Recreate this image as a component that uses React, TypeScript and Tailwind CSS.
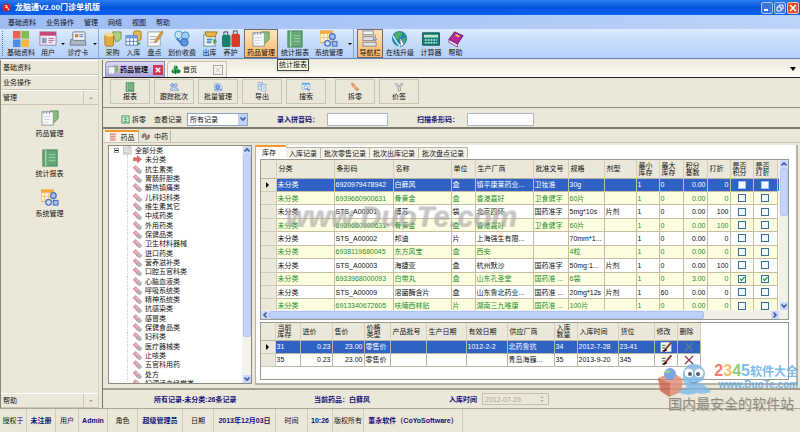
import type { ReactNode } from "react";
import clsx from "clsx";

const icons: Record<string, ReactNode> = {
  blocks: (
    <>
      <rect x="1" y="1" width="8" height="8" fill="#e8664f" />
      <rect x="10" y="1" width="8" height="8" fill="#7cbf4b" />
      <rect x="1" y="10" width="8" height="8" fill="#4c8fe0" />
      <rect x="10" y="10" width="8" height="8" fill="#f4b93c" />
    </>
  ),
  user: (
    <>
      <rect x="1" y="2" width="17" height="14" fill="#f4eef4" stroke="#9a86a8" />
      <rect x="1" y="2" width="17" height="4" fill="#c8487a" />
      <rect x="3" y="8" width="5" height="6" fill="#8d9cc8" />
      <path d="M10 9h6M10 11h6M10 13h4" stroke="#b0648c" />
    </>
  ),
  card: (
    <>
      <path d="M2 10h15l1 6H1z" fill="#aab6c4" stroke="#6f7d90" />
      <rect x="4" y="2" width="13" height="9" rx="1" fill="#eef2f8" stroke="#6f7d90" />
      <circle cx="8" cy="6" r="2" fill="#c98447" />
      <path d="M11 5h4M11 7h4" stroke="#5a78b8" />
    </>
  ),
  buy: (
    <>
      <path d="M9 2h9v7q-2 4-6 3z" fill="#a9cf84" stroke="#6e9c4d" />
      <rect x="1" y="4" width="9" height="13" rx="2" fill="#e2ad3c" stroke="#a97a20" />
      <ellipse cx="5.5" cy="5" rx="4.5" ry="2" fill="#f8dc8c" />
    </>
  ),
  instock: (
    <>
      <rect x="9" y="1" width="8" height="10" rx="2" fill="#e7b94c" stroke="#a97a20" />
      <rect x="1" y="6" width="12" height="10" fill="#fff" stroke="#5b7fc0" />
      <rect x="1" y="6" width="12" height="3" fill="#6d9ae0" />
      <path d="M5 9v7M9 9v7M1 12h12" stroke="#5b7fc0" />
      <path d="m13 12 4 2-4 3z" fill="#4caf50" />
    </>
  ),
  check: (
    <>
      <rect x="2" y="2" width="13" height="15" fill="#fbfbf4" stroke="#9aa0a8" />
      <path d="M4 7h7M4 10h6M4 13h8" stroke="#9ab0d0" />
      <path d="m17 1-7 9-1 3 3-1 6-9z" fill="#eaa23a" stroke="#8a5a20" strokeWidth=".6" />
    </>
  ),
  price: (
    <>
      <circle cx="6" cy="5" r="4" fill="#bfe4f8" stroke="#4b9ad0" />
      <circle cx="13" cy="6" r="4" fill="#9ccff2" stroke="#4b86c8" />
      <circle cx="12" cy="13" r="4" fill="#5f95e0" stroke="#35609c" />
      <path d="m4 9 5 5" stroke="#3a78c0" strokeWidth="2" />
    </>
  ),
  outstock: (
    <>
      <rect x="3" y="5" width="12" height="12" fill="#f4f4ea" stroke="#5c8fb0" />
      <path d="M4 2h13l-2 5H6z" fill="#e9b546" stroke="#a47620" />
      <path d="M6 10h6M6 13h5" stroke="#4f8fd0" strokeWidth="2" />
      <path d="m13 9 4 3-4 3z" fill="#3fa64c" />
    </>
  ),
  care: (
    <>
      <rect x="0" y="5" width="9" height="13" rx="2" fill="#17806f" />
      <rect x="10" y="4" width="9" height="14" rx="2" fill="#d63a28" />
      <path d="M2 5V2h4v3M12 4V1h4v3" stroke="#444" fill="none" />
    </>
  ),
  note: (
    <>
      <path d="M10 2h8v8l-6 6z" fill="#8cbf73" stroke="#5d8f4e" />
      <rect x="1" y="3" width="12" height="14" fill="#fafafa" stroke="#8c97a8" />
      <path d="M3 2v3M6 2v3M9 2v3" stroke="#7d879c" />
      <path d="M3 8h7M3 11h7M3 14h5" stroke="#c7d1e2" />
    </>
  ),
  report: (
    <>
      <rect x="2" y="1" width="15" height="17" fill="#66a878" stroke="#42805a" />
      <path d="M5 1v17" stroke="#c5e3c8" />
      <path d="M8 6h7M8 9h7M8 12h7" stroke="#a2d0a8" />
    </>
  ),
  system: (
    <>
      <rect x="0" y="1" width="13" height="12" fill="#fff6d8" stroke="#e0a33a" />
      <rect x="0" y="1" width="13" height="3" fill="#f4a93a" />
      <path d="M4 4v8M8 4v8M1 8h11" stroke="#f0c878" />
      <circle cx="13" cy="7" r="3" fill="#a9c3f0" stroke="#5478c0" strokeWidth="1.5" />
      <circle cx="8" cy="14" r="3" fill="#d4e0f8" stroke="#5478c0" strokeWidth="1.5" />
      <rect x="13" y="12" width="5" height="5" fill="#9dbbf0" stroke="#4468b8" />
    </>
  ),
  nav: (
    <>
      <rect x="2" y="1" width="11" height="4" fill="#f2f2f2" stroke="#8a8a9c" />
      <rect x="2" y="7" width="11" height="4" fill="#dfe3ee" stroke="#8a8a9c" />
      <rect x="2" y="13" width="14" height="4" fill="#dfe3ee" stroke="#8a8a9c" />
      <path d="M15 5v6m-2-2 2 3 2-3" stroke="#6e83c8" fill="none" />
    </>
  ),
  upgrade: (
    <>
      <circle cx="9" cy="9" r="8" fill="#2389a8" />
      <path d="M4 4q5-4 8 0l-3 5-4 1zM11 10l5-2-2 7-4 1z" fill="#4fb45b" />
      <path d="M9 7l5 8-4 3z" fill="#fff" stroke="#426fba" />
      <path d="M2 6q4 8 8 11" stroke="#d7eaf8" fill="none" strokeWidth="1.5" />
    </>
  ),
  calc: (
    <>
      <rect x="0" y="3" width="19" height="13" rx="1" fill="#157c78" stroke="#0b5452" />
      <rect x="2" y="5" width="15" height="3" fill="#b9e2cc" />
      <path d="M3 10.500h13M3 13.500h13" stroke="#c9f0e2" strokeWidth="1.500" strokeDasharray="2 1" />
    </>
  ),
  help: (
    <>
      <path d="m8 2 9 4-6 9-9-5z" fill="#b32a9c" stroke="#6b1566" />
      <path d="m2 10 9 5v3l-9-5z" fill="#f3e6f2" stroke="#6b1566" strokeWidth=".7" />
      <path d="m9 5 4 2" stroke="#f7cf4f" strokeWidth="2" />
    </>
  ),
  batch: (
    <>
      <circle cx="6" cy="6" r="3" fill="#9fb7ec" stroke="#5475c0" />
      <circle cx="13" cy="6" r="3" fill="#b9cdf4" stroke="#5475c0" />
      <path d="M2 16q0-6 5-5 2-2 5 0 6-1 6 5z" fill="#c7d4f0" stroke="#7088c4" />
    </>
  ),
  people: (
    <>
      <path d="M3 3h10l4 5v9H3z" fill="#dfe9fb" stroke="#5f85cc" />
      <circle cx="9" cy="9" r="4" fill="#7fa3e8" stroke="#3c62b0" />
      <path d="M4 14h12" stroke="#5f85cc" strokeWidth="2" />
    </>
  ),
  exportData: (
    <>
      <rect x="2" y="1" width="9" height="13" fill="#dbe7fa" stroke="#6c8cc8" />
      <rect x="9" y="5" width="8" height="12" fill="#eef4ff" stroke="#6c8cc8" />
      <path d="M4 5h5M4 8h4M11 9h4M11 12h4" stroke="#5377bd" />
    </>
  ),
  search: (
    <>
      <rect x="2" y="2" width="15" height="12" fill="#d9ebfb" stroke="#72a7d8" />
      <rect x="2" y="2" width="15" height="3" fill="#5fa3e2" />
      <circle cx="9" cy="10" r="3" fill="#fff" stroke="#4d78b4" />
      <path d="m11 12 5 5" stroke="#4d78b4" strokeWidth="2" />
    </>
  ),
  split: (
    <>
      <path d="M3 2q5-1 7 5l7 7-4 3-6-7Q3 8 3 2z" fill="#efa36b" stroke="#b86a38" />
      <path d="m7 6 6 7" stroke="#fbe2c8" />
    </>
  ),
  tag: <path d="M3 2q0 6 5 8v7h4v-7q4-2 4-8M6 2l4 7 4-7" fill="#eef0f0" stroke="#82878c" strokeWidth="1.500" />,
  home: (
    <>
      <circle cx="9" cy="5" r="4" fill="#16833b" />
      <circle cx="5" cy="12" r="4" fill="#1d9145" />
      <circle cx="14" cy="12" r="4" fill="#16833b" />
      <path d="M9 9v8" stroke="#0f6a2c" strokeWidth="3" />
      <circle cx="8" cy="4" r="1.500" fill="#7bd382" />
      <circle cx="5" cy="11" r="1.500" fill="#7bd382" />
    </>
  ),
  medicine: (
    <>
      <rect x="3" y="1" width="12" height="17" fill="#fff" stroke="#cf6464" />
      <path d="M4 4h10M4 8h10M4 12h10M4 16h10" stroke="#d45a5a" strokeWidth="2" />
    </>
  ),
  herb: (
    <>
      <path d="M2 12Q1 3 9 3l2 3q-5 0-5 6zM9 16l1-4q5 0 5-6l4 1q0 9-10 9z" fill="#8c8480" stroke="#625c5a" />
      <circle cx="10" cy="9" r="3" fill="#b07f78" />
    </>
  ),
  refresh: (
    <>
      <rect x="2" y="2" width="15" height="15" fill="#e4f2e2" stroke="#3a9154" strokeWidth="2" />
      <path d="M6 6h7M6 10h7M6 14h7" stroke="#3a9154" strokeWidth="2" />
    </>
  ),
  arrow: <path d="M1 6h8V1l9 8-9 8v-5H1z" fill="#dc6868" stroke="#b84e50" />,
  capsule: (
    <>
      <path d="m0 6 6-5 7 8-5 5z" fill="#e39ba5" stroke="#c4737e" />
      <path d="m7 14 6-6 6 6-5 5z" fill="#bcb5b8" stroke="#938a90" />
      <path d="m5 4 6 6" stroke="#fbe4e7" strokeWidth="1.500" />
    </>
  ),
  list: (
    <>
      <rect x="1" y="2" width="16" height="15" fill="#f3f3f0" stroke="#8a8a88" />
      <path d="M3 6h8M3 10h12M3 14h10M13 2v6" stroke="#8a8a88" />
    </>
  ),
  pen: (
    <>
      <rect x="1" y="2" width="17" height="15" fill="#f7f9ee" />
      <path d="M3 7h6M3 11h5" stroke="#4f9c55" strokeWidth="2" />
      <path d="M18 2 8 14l-2 3" stroke="#952d38" strokeWidth="3" fill="none" />
      <path d="m4 16 7-2" stroke="#111" strokeWidth="2" />
    </>
  ),
};

const Icon = ({ name, className }: { name: string; className: string }) => (
  <svg viewBox="0 0 19 19" className={clsx("shrink-0", className)} aria-hidden="true">
    {icons[name]}
  </svg>
);

const Chevron = ({ className }: { className: string }) => (
  <svg viewBox="0 0 8 8" className={clsx("h-2 w-2 shrink-0", className)} aria-hidden="true">
    <path d="m1.500 5.500 2.500-2.500 2.500 2.500" fill="none" stroke="#3d5a9c" strokeWidth="1.600" />
  </svg>
);

type Tool = { label: string; icon: string; width: string; active?: boolean; menu?: boolean; end?: boolean };

const tools: Tool[] = [
  { label: "基础资料", icon: "blocks", width: "w-7" },
  { label: "用户", icon: "user", width: "w-[26px]" },
  { label: "", icon: "", width: "w-1", menu: true },
  { label: "诊疗卡", icon: "card", width: "w-[26px]" },
  { label: "", icon: "", width: "w-2", menu: true, end: true },
  { label: "采购", icon: "buy", width: "w-[21px]" },
  { label: "入库", icon: "instock", width: "w-[21px]" },
  { label: "盘点", icon: "check", width: "w-[21px]" },
  { label: "划价收费", icon: "price", width: "w-[34px]" },
  { label: "出库", icon: "outstock", width: "w-[21px]" },
  { label: "养护", icon: "care", width: "w-[21px]", end: true },
  { label: "药品管理", icon: "note", width: "w-[34px]", active: true },
  { label: "统计报表", icon: "report", width: "w-[34px]" },
  { label: "系统管理", icon: "system", width: "w-[34px]" },
  { label: "", icon: "", width: "w-2", menu: true, end: true },
  { label: "导航栏", icon: "nav", width: "w-[26px]", active: true },
  { label: "在线升级", icon: "upgrade", width: "w-[34px]" },
  { label: "计算器", icon: "calc", width: "w-7" },
  { label: "帮助", icon: "help", width: "w-[21px]" },
];

const actions = [
  { label: "报表", icon: "report" },
  { label: "跟踪批次", icon: "batch" },
  { label: "批量管理", icon: "people" },
  { label: "导出", icon: "exportData" },
  { label: "搜索", icon: "search" },
  { label: "拆零", icon: "split" },
  { label: "价签", icon: "tag" },
];

const categories = [
  "未分类", "抗生素类", "胃肠肝胆类", "解热镇痛类", "儿科妇科类", "维生素其它", "中成药类", "外用药类", "保健品类",
  "卫生材料器械", "进口药类", "营养滋补类", "口腔五官科类", "心脑血液类", "呼吸系统类", "精神系统类", "抗感染类",
  "感冒类", "保健食品类", "妇科类", "医疗器械类", "止咳类", "五官科用药", "处方", "妇调活血经带类",
];

const stockColumns = [
  { name: "分类", width: "w-[58px]" },
  { name: "条形码", width: "w-[59px]" },
  { name: "名称", width: "w-[58px]" },
  { name: "单位", width: "w-6" },
  { name: "生产厂商", width: "w-[58px]" },
  { name: "批准文号", width: "w-[35px]" },
  { name: "规格", width: "w-9" },
  { name: "剂型", width: "w-8" },
  { name: "最小\n库存", width: "w-[23px]" },
  { name: "最大\n库存", width: "w-6" },
  { name: "积分\n基数", width: "w-6" },
  { name: "打折", width: "w-[23px]" },
  { name: "是否\n积分", width: "w-[23px]" },
  { name: "是否\n打折", width: "w-6" },
];

const stock = [
  ["未分类", "6920979478942", "白藓风", "盒", "镇平康莱药业...", "卫妆准", "30g", "", "1", "0", "0.00", "0"],
  ["未分类", "6939660900631", "骨黄金", "盒", "香港嘉好", "卫食健字", "60片", "", "1", "0", "0.00", "0"],
  ["未分类", "STS_A00001", "博苏", "袋", "北京四环", "国药准字", "5mg*10s", "片剂", "1", "0", "0.00", "100"],
  ["未分类", "6939660900631*", "骨黄金", "盒", "香港嘉好", "卫食健字", "60片", "", "1", "0", "0.00", "100"],
  ["未分类", "STS_A00002", "邦迪", "片", "上海强生有限...", "", "70mm*1...", "", "1", "0", "0.00", "0"],
  ["未分类", "6938119680045", "东方风宝", "盒", "西安", "", "4粒", "", "1", "0", "0.00", "0"],
  ["未分类", "STS_A00003", "海捷亚", "盒", "杭州默沙", "国药准字", "50mg:1...", "片剂", "1", "0", "0.00", "100"],
  ["未分类", "6933968000093", "白带丸", "盒", "山东孔圣堂", "国药准 ...", "6袋", "", "1", "0", "3.00", "0"],
  ["未分类", "STS_A00009", "溶菌酶含片", "盒", "山东鲁北药业...", "国药准 ...", "20mg*12s", "片剂", "1", "60", "0.00", "0"],
  ["未分类", "6913340672605", "呋喃西林贴", "片", "湖南三九唯康", "国药准 ...", "100片", "", "1", "0", "0.00", "0"],
];

const batchColumns = [
  { name: "当前\n库存", width: "w-[25px]" },
  { name: "进价", width: "w-8" },
  { name: "售价", width: "w-8" },
  { name: "价格\n类型", width: "w-[26px]" },
  { name: "产品批号", width: "w-9" },
  { name: "生产日期", width: "w-10" },
  { name: "有效日期", width: "w-[41px]" },
  { name: "供应厂商", width: "w-[47px]" },
  { name: "入库\n数量", width: "w-[23px]" },
  { name: "入库时间", width: "w-[41px]" },
  { name: "货位", width: "w-9" },
  { name: "修改", width: "w-[23px]" },
  { name: "删除", width: "w-[23px]" },
];

const batches = [
  ["31", "0.23", "23.00", "零售价", "", "", "1012-2-2", "北药鲁抗", "34", "2012-7-28", "23-41"],
  ["35", "0.23", "23.00", "零售价", "", "", "", "青岛海巍...", "35", "2013-9-20", "345"],
];

const statusCells = [
  { text: "授权于", width: "w-[27px]" },
  { text: "未注册", width: "w-[29px]", strong: true },
  { text: "用户", width: "w-[23px]" },
  { text: "Admin", width: "w-[29px]", strong: true },
  { text: "角色", width: "w-[30px]" },
  { text: "超级管理员", width: "w-[45px]", strong: true },
  { text: "日期", width: "w-[31px]" },
  { text: "2013年12月03日", width: "w-[62px]", strong: true },
  { text: "时间", width: "w-8" },
  { text: "10:26", width: "w-[25px]", strong: true },
  { text: "版权所有", width: "w-[31px]" },
  { text: "董永软件（CoYoSoftware）", width: "w-[99px]", strong: true },
];

const TitleBar = () => (
  <header className="flex h-[15px] items-center gap-1 bg-linear-to-b from-[#2a7df0] via-[#0553dd] to-[#0a62f4] pr-px pl-[2px] text-white">
    <svg viewBox="0 0 10 10" className="h-[9px] w-[9px]" aria-hidden="true">
      <circle cx="5" cy="5" r="4.500" fill="#d91f26" />
      <path d="M3 3q3-1 3 1L4 5q4 0 3 3" fill="none" stroke="#fff" />
    </svg>
    <h1 className="text-[8px] leading-none font-bold">龙脑通V2.00门诊单机版</h1>
    <div className="ml-auto flex gap-px">
      <button aria-label="最小化" className="flex h-3 w-3 items-end rounded-xs border border-[#a9c5f5] bg-[#3c74e0] p-[2px]">
        <span className="h-[2px] w-1 bg-white" />
      </button>
      <button aria-label="还原" className="grid h-3 w-3 place-items-center rounded-xs border border-[#a9c5f5] bg-[#3c74e0]">
        <svg viewBox="0 0 8 8" className="h-2 w-2" fill="none" stroke="#fff" aria-hidden="true">
          <path d="M3 3V1h4v4H5M1 3h4v4H1z" />
        </svg>
      </button>
      <button aria-label="关闭" className="grid h-3 w-3 place-items-center rounded-xs border border-[#f0c0b0] bg-[#dc5030]">
        <svg viewBox="0 0 8 8" className="h-2 w-2" stroke="#fff" strokeWidth="1.500" aria-hidden="true">
          <path d="m1 1 6 6M7 1 1 7" />
        </svg>
      </button>
    </div>
  </header>
);

const ToolBar = () => (
  <div className="relative flex h-[30px] items-stretch border-b border-[#6b83bd] bg-linear-to-b from-[#dcebff] via-[#c5dbf8] to-[#b4d0fa]">
    <span className="my-[2px] mr-1 ml-[2px] border-l border-dotted border-[#5777b5]" />
    {tools.map((tool, i) =>
      tool.menu ? (
        <div key={i} className={clsx("flex items-center justify-center", tool.width, tool.end && "mr-[3px] border-r border-[#8aa6d8]")}>
          <span className="border-x-2 border-t-2 border-x-transparent border-t-black" />
        </div>
      ) : (
        <button
          key={i}
          className={clsx(
            "flex flex-col items-center whitespace-nowrap",
            tool.width,
            tool.active ? "border border-[#6c6a78] bg-linear-to-b from-[#fde6b8] to-[#f9b765]" : "pt-px",
            tool.end && "mr-[3px]",
          )}
        >
          <Icon name={tool.icon} className="h-[18px] w-[18px]" />
          <span className="leading-[9px]">{tool.label}</span>
        </button>
      ),
    )}
    <div role="tooltip" className="absolute top-[30px] left-[277px] z-10 border border-[#444] bg-[#fbfbe4] px-px leading-[10px] shadow">
      统计报表
    </div>
  </div>
);

const SideHeader = ({ label, arrow }: { label: string; arrow?: "up" | "down" }) => (
  <button className="flex h-[15px] w-full items-center border-t border-b border-t-white border-b-[#c9c5b2] bg-[#ebe8d9] pl-[2px] text-left">
    {label}
    {arrow && (
      <span className="ml-auto grid h-full w-[15px] place-items-center border-l border-[#cdc9b6]">
        <span
          className={clsx(
            "border-x-2 border-x-transparent",
            arrow === "up" ? "border-b-2 border-b-[#a8a594]" : "border-t-2 border-t-[#a8a594]",
          )}
        />
      </span>
    )}
  </button>
);

const SideBar = () => (
  <nav className="flex w-[99px] shrink-0 flex-col border-r border-l border-r-[#d4d0bf] border-l-[#8a8778] bg-[#ebe8d9]">
    <SideHeader label="基础资料" />
    <SideHeader label="业务操作" />
    <SideHeader label="管理" arrow="up" />
    <div className="flex flex-1 flex-col items-center gap-[11px] pt-1">
      {[["note", "药品管理"], ["report", "统计报表"], ["system", "系统管理"]].map(([icon, label]) => (
        <button key={label} className="flex flex-col items-center gap-[2px]">
          <Icon name={icon} className="h-[18px] w-[18px]" />
          <span>{label}</span>
        </button>
      ))}
    </div>
    <SideHeader label="帮助" arrow="down" />
  </nav>
);

const DocumentTabs = () => (
  <div className="flex h-[18px] items-end border-b border-[#222] bg-linear-to-b from-[#eeebdb] to-[#fdfdf8] pl-[2px]">
    <div className="flex h-4 w-[60px] items-center gap-[2px] rounded-tl border border-b-0 border-[#8f8ab8] bg-linear-to-b from-[#dcd8f4] to-[#aaa2dc] pl-[2px]">
      <Icon name="note" className="h-[10px] w-[10px]" />
      <span className="font-bold">药品管理</span>
      <button aria-label="关闭药品管理" className="mr-px ml-auto grid h-[10px] w-[10px] place-items-center bg-[#c8384e]">
        <svg viewBox="0 0 8 8" className="h-[6px] w-[6px]" stroke="#fff" strokeWidth="2" aria-hidden="true">
          <path d="m1 1 6 6M7 1 1 7" />
        </svg>
      </button>
    </div>
    <div className="ml-[2px] flex h-4 w-[60px] items-center gap-[2px] rounded-tl border border-b-0 border-[#c4c1b4] bg-[#f6f4ea] pl-[3px]">
      <Icon name="home" className="h-[10px] w-[10px]" />
      <span>首页</span>
      <button aria-label="关闭首页" className="mr-[3px] ml-auto grid h-[10px] w-[10px] place-items-center border border-[#aaa]">
        <svg viewBox="0 0 8 8" className="h-[6px] w-[6px]" stroke="#bbb" aria-hidden="true">
          <path d="m1 1 6 6M7 1 1 7" />
        </svg>
      </button>
    </div>
    <button aria-label="标签列表" className="mr-1 mb-[6px] ml-auto border-x-[3px] border-t-4 border-x-transparent border-t-black" />
  </div>
);

const FilterBar = () => (
  <form className="flex h-[21px] items-center border-b-2 border-[#7d7b70] pt-[3px] pl-[18px]">
    <button type="button" className="flex items-center gap-[2px]">
      <Icon name="refresh" className="h-[9px] w-[9px]" />
      拆零
    </button>
    <label htmlFor="records" className="ml-2">查看记录</label>
    <div className="relative ml-[5px] w-[61px]">
      <select id="records" className="block h-[13px] w-full appearance-none border border-[#8ba3c4] bg-white pl-[2px]">
        <option>所有记录</option>
      </select>
      <span className="pointer-events-none absolute top-px right-px grid h-[11px] w-[9px] place-items-center bg-[#bfd1fa]">
        <Chevron className="rotate-180" />
      </span>
    </div>
    <label htmlFor="pinyin" className="ml-[29px] font-bold text-[#12127a]">录入拼音码：</label>
    <input id="pinyin" className="ml-2 h-[13px] w-[61px] border border-[#a9b8c8] bg-white px-px" />
    <label htmlFor="barcode" className="ml-[29px] font-bold text-[#12127a]">扫描条形码：</label>
    <input id="barcode" className="ml-2 h-[13px] w-[67px] border border-[#a9b8c8] bg-white px-px" />
  </form>
);

const CategoryTree = () => (
  <div className="flex h-[239px] w-[144px] shrink-0 overflow-hidden border border-[#8d8b7e] bg-white">
    <ul className="flex h-[242px] min-w-0 flex-1 flex-col">
      <li className="flex flex-1 items-center gap-[3px] pl-[5px]">
        <span className="grid h-[5px] w-[5px] place-items-center border border-[#9aa2b0]">
          <span className="h-px w-[3px] bg-black" />
        </span>
        <Icon name="list" className="ml-px h-[9px] w-[9px]" />
        全部分类
      </li>
      {categories.map((name, i) => (
        <li key={name} className="ml-[18px] flex min-h-0 flex-1 items-center gap-[3px] border-l border-dotted border-[#ccc] pl-[5px] leading-[9px]">
          <Icon name={i === 0 ? "arrow" : "capsule"} className="h-[9px] w-[9px]" />
          {name}
        </li>
      ))}
    </ul>
    <div className="flex w-[9px] flex-col items-center bg-[#f3f3ec]">
      <Chevron className="bg-[#cad8fb]" />
      <div className="h-[183px] w-2 rounded-xs border border-[#b2c6f4] bg-[#c4d4fb]" />
      <Chevron className="mt-auto rotate-180 bg-[#cad8fb]" />
    </div>
  </div>
);

const TickBox = ({ label, checked, selected }: { label: string; checked: boolean; selected: boolean }) => (
  <span className="relative mx-auto block h-2 w-2">
    <input
      type="checkbox"
      aria-label={label}
      defaultChecked={checked}
      className={clsx("peer block h-2 w-2 appearance-none border bg-[#f4f9fc]", selected ? "border-[#9fc0ee]" : "border-[#3d6f9c]")}
    />
    <svg viewBox="0 0 8 8" className="pointer-events-none absolute inset-0 hidden h-2 w-2 peer-checked:block" aria-hidden="true">
      <path d="m2 3.500 1.500 2 3-3.500" fill="none" stroke="#2b9a3c" strokeWidth="1.200" />
    </svg>
  </span>
);

const HeadCell = ({ name, width }: { name: string; width: string }) => (
  <th className={clsx("border-r border-[#d3cfbd] p-0 pl-[2px] text-left leading-[7px] font-normal whitespace-pre", width)}>{name}</th>
);

const Marker = ({ selected }: { selected: boolean }) => (
  <td className="border-r border-b border-[#cfcbb8] bg-[#ebe8d9] p-0">
    {selected && <span className="ml-[5px] block w-1 border-y-[3px] border-l-[3px] border-y-transparent border-l-black" />}
  </td>
);

const StockTable = () => (
  <div className="border border-[#9a988c] bg-[#ebe8d9]">
    <div className="flex h-[150px]">
      <div className="relative min-w-0 flex-1 overflow-hidden bg-white">
        <table className="h-[153px] w-full table-fixed border-collapse">
          <thead>
            <tr className="h-[18px] border-b border-[#b5b2a2] bg-[#ebe8d9]">
              <th className="w-[15px] border-r border-[#d3cfbd] p-0" />
              {stockColumns.map((column) => <HeadCell key={column.name} {...column} />)}
              <th className="p-0" />
            </tr>
          </thead>
          <tbody>
            {stock.map((row, i) => (
              <tr
                key={i}
                className={clsx(i === 0 ? "bg-[#2f62c4] text-white" : i % 2 ? "bg-[#fdfde0] text-[#22902a]" : "bg-white")}
              >
                <Marker selected={i === 0} />
                {row.map((cell, j) => (
                  <td
                    key={j}
                    className={clsx(
                      "overflow-hidden border-r border-b border-[#c7bda2] p-0 px-px leading-[9px] whitespace-nowrap",
                      j > 9 && "text-right",
                    )}
                  >
                    {cell}
                  </td>
                ))}
                <td className="border-r border-b border-[#c7bda2] p-0">
                  <TickBox label="是否积分" checked={i === 7} selected={i === 0} />
                </td>
                <td className="border-r border-b border-[#c7bda2] p-0">
                  <TickBox label="是否打折" checked={i === 7} selected={i === 0} />
                </td>
                <td className="p-0" />
              </tr>
            ))}
          </tbody>
        </table>
        <span className="pointer-events-none absolute top-[42px] left-6 font-[Liberation_Sans,sans-serif] text-[29px] leading-none font-bold text-[#c4c4c4]/50 italic [text-shadow:1px_1px_1px_#7776]">
          www.DuoTe.com
        </span>
      </div>
      <div className="flex w-[9px] flex-col items-center bg-[#f1f1ea]">
        <Chevron className="bg-[#cad8fb]" />
        <div className="h-12 w-2 rounded-xs border border-[#b2c6f4] bg-[#c4d4fb]" />
        <Chevron className="mt-auto rotate-180 bg-[#cad8fb]" />
      </div>
    </div>
    <div className="flex h-[9px] items-center bg-[#f1f1ea] pr-[9px]">
      <Chevron className="-rotate-90 bg-[#cad8fb]" />
      <div className="h-2 w-[84%] rounded-xs border border-[#a9c4f4] bg-[#bdd2fb]" />
      <Chevron className="ml-auto rotate-90 bg-[#cad8fb]" />
    </div>
  </div>
);

const BatchTable = () => (
  <div className="h-[58px] border border-[#9a988c] bg-white">
    <table className="w-[439px] table-fixed border-collapse">
      <thead>
        <tr className="h-[17px] border-b border-[#b5b2a2] bg-[#ebe8d9]">
          <th className="w-[14px] border-r border-[#d3cfbd] p-0" />
          {batchColumns.map((column) => <HeadCell key={column.name} {...column} />)}
        </tr>
      </thead>
      <tbody>
        {batches.map((row, i) => (
          <tr key={i} className={clsx("h-[13px]", i === 0 && "bg-[#2f62c4] text-white")}>
            <Marker selected={i === 0} />
            {row.map((cell, j) => (
              <td
                key={j}
                className={clsx(
                  "overflow-hidden border-r border-b border-[#b9b5a6] p-0 px-px leading-[9px] whitespace-nowrap",
                  (j === 1 || j === 2) && "text-right",
                )}
              >
                {cell}
              </td>
            ))}
            <td className="border-r border-b border-[#b9b5a6] p-0">
              <button aria-label="修改" className="mx-auto block">
                <Icon name="pen" className="h-3 w-3" />
              </button>
            </td>
            <td className="border-r border-b border-[#b9b5a6] p-0">
              <button aria-label="删除" className="mx-auto block">
                <svg viewBox="0 0 10 10" className="h-[10px] w-[10px]" aria-hidden="true">
                  <path d="m1 1 8 8M9 1 1 9" stroke={i === 0 ? "#5f7e84" : "#8c3a4c"} strokeWidth="1.300" />
                </svg>
              </button>
            </td>
          </tr>
        ))}
      </tbody>
    </table>
  </div>
);

const StockPanel = () => (
  <section className="min-w-0 flex-1 border-r-2 border-b-2 border-l border-[#b5b3a6] bg-white pr-[7px] pb-[2px] pl-1">
    <div role="tablist" className="-mx-1 flex h-[13px] items-end">
      <button role="tab" aria-selected="true" className="h-[13px] w-[30px] border-t-2 border-[#f09a2c] pr-1">库存</button>
      {["入库记录", "批次零售记录", "批次出库记录", "批次盘点记录"].map((name) => (
        <button key={name} role="tab" aria-selected="false" className="h-[11px] border-t border-r border-[#b9b6a8] bg-[#f3f1e6] px-[3px]">
          {name}
        </button>
      ))}
    </div>
    <div className="mt-px">
      <StockTable />
    </div>
    <div className="mt-[2px]">
      <BatchTable />
    </div>
  </section>
);

const Logo = () => (
  <div className="pointer-events-none absolute right-[2px] bottom-[20px] flex flex-col items-end opacity-80">
    <div className="flex items-center">
      <svg viewBox="0 0 58 36" className="h-9 w-[58px]" aria-hidden="true">
        <path d="M2 17 16 11l11 7-2 13-12 5-9-6z" fill="#df8a72" />
        <path d="m2 17 12 5v14l-9-6z" fill="#c9604b" />
        <circle cx="14" cy="13" r="6" fill="#5f8edc" />
        <path d="M9 9h5v3H9z" fill="#79c56b" />
        <path d="M27 13q2-11 11-10 10 0 11 10-1 8-8 9 9 1 14 9-8 3-14 1-10 4-19-1 5-2 9-6-5-3-4-12z" fill="#7cb9ea" />
        <circle cx="33" cy="12" r="5" fill="#fff" stroke="#6ba1cf" />
        <circle cx="43" cy="12" r="5" fill="#fff" stroke="#6ba1cf" />
        <circle cx="34" cy="13" r="2" fill="#25364c" />
        <circle cx="42" cy="13" r="2" fill="#25364c" />
        <path d="M33 20q5 4 9 0" stroke="#3f7bb1" fill="none" />
      </svg>
      <div className="flex flex-col items-end pb-1">
        <p className="text-xs leading-[14px] font-bold whitespace-nowrap text-[#5cacec]">
          <span className="text-base leading-[14px]">
            <span className="text-[#ee5a4c]">2</span>
            <span className="text-[#f4b13c]">3</span>
            <span className="text-[#74c257]">4</span>5
          </span>
          软件大全
        </p>
        <p className="text-[10px] leading-[12px] font-bold text-[#58a8ea]">www.DuoTe.com</p>
      </div>
    </div>
    <p className="mr-1 text-[14px] leading-[15px] text-[#77756c] [text-shadow:1px_1px_0_#c9c6b8]">国内最安全的软件站</p>
  </div>
);

const App = () => {
  return (
    <div className="relative flex min-h-screen flex-col overflow-hidden bg-[#ebe8d9] font-[Liberation_Sans,Noto_Sans_CJK_SC,sans-serif] text-[7px] leading-[9px] text-[#111]">
      <TitleBar />
      <div className="flex h-[14px] items-center gap-[10px] bg-linear-to-r from-[#9dbcf4] to-[#bcd3f8] pl-2">
        {["基础资料", "业务操作", "管理", "网络", "视图", "帮助"].map((name) => (
          <button key={name}>{name}</button>
        ))}
      </div>
      <ToolBar />
      <div className="flex flex-1 gap-[3px] pt-px">
        <SideBar />
        <main className="flex min-w-0 flex-1 flex-col border-l border-[#77756a]">
          <DocumentTabs />
          <div className="flex h-[30px] items-start gap-1 border-b border-[#8f8d80] pt-px pl-[7px]">
            {actions.map(({ label, icon }, i) => (
              <button
                key={label}
                className={clsx("flex h-[25px] w-10 flex-col items-center justify-center border border-[#c9c5b4]", i === 5 && "ml-[5px]")}
              >
                <Icon name={icon} className="h-[10px] w-[10px]" />
                {label}
              </button>
            ))}
          </div>
          <FilterBar />
          <div role="tablist" className="flex h-[14px] border-b border-[#c9c6b6] pt-px pl-[2px]">
            <button role="tab" aria-selected="true" className="flex w-[34px] items-center justify-center gap-1 border-t-2 border-r border-t-[#f09a2c] border-r-[#b9b6a8] bg-[#f6f4ea]">
              <Icon name="medicine" className="h-2 w-2" />
              药品
            </button>
            <button role="tab" aria-selected="false" className="flex w-8 items-center justify-center gap-1 border-r border-[#b9b6a8]">
              <Icon name="herb" className="h-[9px] w-[9px]" />
              中药
            </button>
          </div>
          <div className="flex flex-1 gap-[3px] pt-[2px] pr-[2px] pl-[5px]">
            <CategoryTree />
            <StockPanel />
          </div>
          <div className="mt-[3px] flex h-5 items-center border-t-2 border-[#a3a194] pl-[51px] font-bold text-[#12127a]">
            <span className="w-[160px]">所有记录-未分类:26条记录</span>
            <span className="w-[135px]">当前药品：白藓风</span>
            <label htmlFor="stocked">入库时间</label>
            <div className="ml-[5px] flex h-3 w-[67px] items-center border border-[#c3c0b0] pr-1">
              <input id="stocked" disabled defaultValue="2012-07-29" className="min-w-0 flex-1 px-[2px] font-normal text-[#aaa797]" />
              <span className="flex flex-col gap-[2px]">
                <span className="border-x-2 border-b-2 border-x-transparent border-b-[#b8b5a6]" />
                <span className="border-x-2 border-t-2 border-x-transparent border-t-[#b8b5a6]" />
              </span>
            </div>
          </div>
        </main>
      </div>
      <footer className="flex h-6 border-t border-[#aaa798]">
        {statusCells.map(({ text, width, strong }) => (
          <div
            key={text}
            className={clsx(
              "flex items-center justify-center border-r border-[#d0ccba] whitespace-nowrap",
              width,
              strong && "font-bold text-[#12127a]",
            )}
          >
            {text}
          </div>
        ))}
      </footer>
      <Logo />
    </div>
  );
};

export default App;
